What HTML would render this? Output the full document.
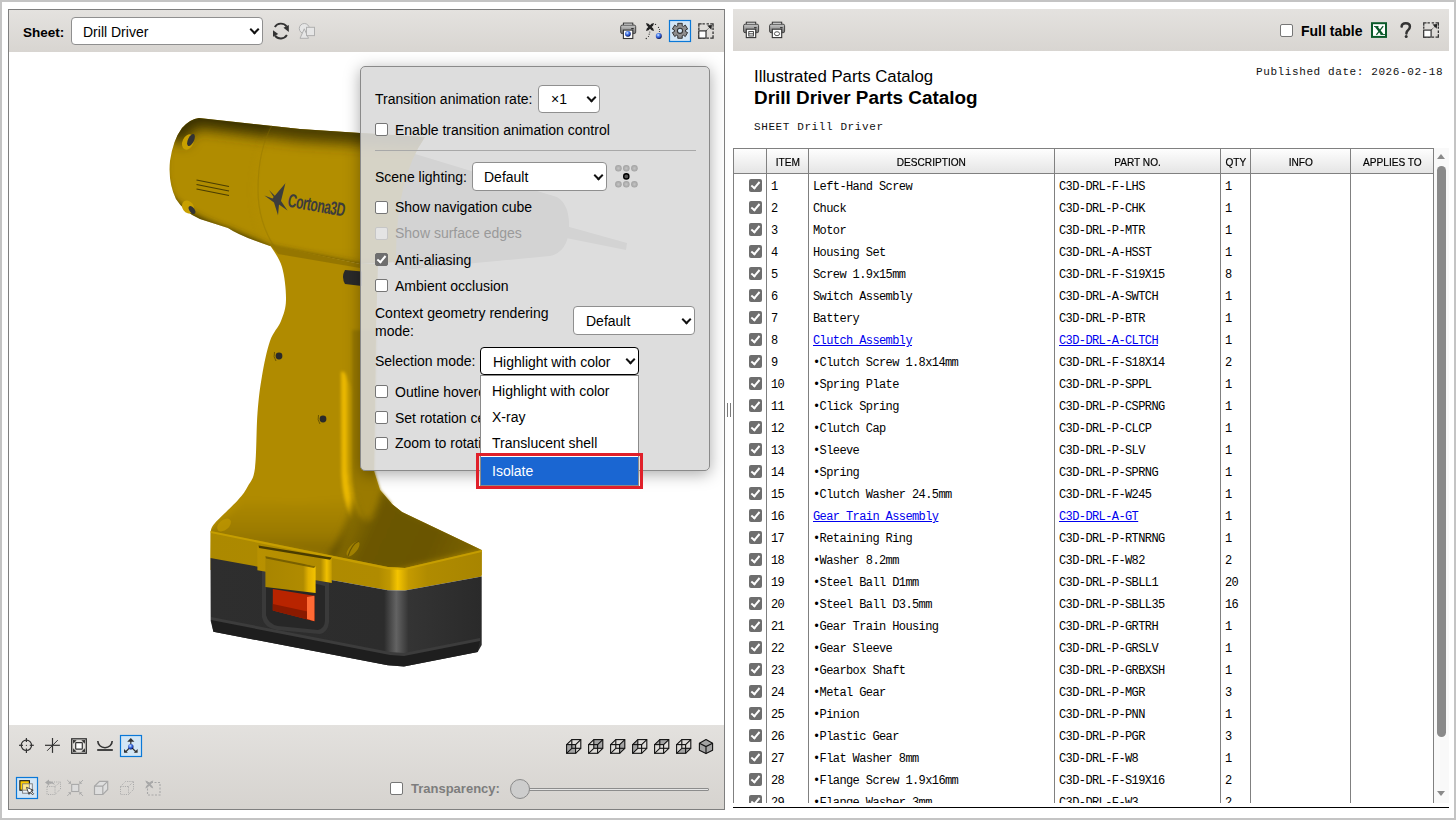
<!DOCTYPE html>
<html><head><meta charset="utf-8">
<style>
*{box-sizing:border-box}
html,body{margin:0;padding:0;width:1456px;height:820px;overflow:hidden;background:#fff;font-family:"Liberation Sans",sans-serif;color:#000}
.a{position:absolute}
.tb{position:absolute;background:linear-gradient(#e4e2df,#d8d5d1)}
.sel{position:absolute;background:#fff;border:1px solid #8f8f8f;border-radius:4px;color:#000}
.sel span{position:absolute;white-space:nowrap;font-size:14px;line-height:16px}
.sel .arr{position:absolute;right:4.5px;top:50%;width:7px;height:7px;border-right:2.3px solid #111;border-bottom:2.3px solid #111;transform:translateY(-72%) rotate(45deg)}
.chk{position:absolute;width:13px;height:13px;border:1px solid #767676;border-radius:2px;background:#fff}
.chk.on{background:#6e6e6e;border-color:#6e6e6e}
.chk.on:after{content:"";position:absolute;left:3px;top:0px;width:3px;height:7px;border-right:2px solid #fff;border-bottom:2px solid #fff;transform:rotate(40deg)}
.l{position:absolute;font-size:14px;line-height:16px;white-space:nowrap;color:#000}
/* table */
#tbl{position:absolute;left:733px;top:148px;width:716px;height:655px;overflow:hidden}
.hd{position:absolute;top:0;height:26px;border:1px solid #808080;background:linear-gradient(#fefefe,#e5e5e5);font-size:11.5px;text-align:center;line-height:26px;color:#000}
.hd b{display:inline-block;font-weight:normal;transform:scaleX(0.88);-webkit-text-stroke:0.2px #000}
.vl{position:absolute;top:25px;width:1px;height:640px;background:#808080}
.r{position:absolute;left:0;width:716px;height:22px;font-family:"Liberation Mono",monospace;font-size:12px;letter-spacing:-0.6px;line-height:22px;white-space:nowrap}
.r span{position:absolute;top:2px}
.r .c1{left:38px}.r .c2{left:80px}.r .c3{left:326px}.r .c4{left:492px}
.r a{color:#0000ee;text-decoration:underline}
.cb{position:absolute;left:16px;top:5px;width:13px;height:13px;border-radius:2px;background:#6e6e6e}
.cb:after{content:"";position:absolute;left:4px;top:1px;width:3px;height:7px;border-right:2px solid #fff;border-bottom:2px solid #fff;transform:rotate(40deg)}
</style></head><body>
<div class="a" style="left:0;top:0;width:1456px;height:820px;border:2px solid #c4c4c4"></div>
<!-- LEFT PANEL -->
<div class="a" style="left:8px;top:9px;width:717px;height:801px;border:1px solid #7f7f7f;background:#fff"></div>
<div class="tb" style="left:9px;top:10px;width:715px;height:42px"></div>
<div class="tb" style="left:9px;top:725px;width:715px;height:84px;background:linear-gradient(#e3e1de,#d6d3cf)"></div>
<div class="l" style="left:23px;top:25px;font-weight:bold;font-size:13.5px">Sheet:</div>
<div class="sel" style="left:71px;top:17px;width:192px;height:28px"><span style="left:11px;top:6px">Drill Driver</span><i class="arr"></i></div>
<div class="chk" style="left:390px;top:782px"></div>
<div class="l" style="left:411px;top:781px;font-weight:bold;font-size:13px;color:#7d7d7d">Transparency:</div>
<div class="a" style="left:520px;top:788px;width:189px;height:3px;border:1px solid #8c8c8c;background:#e6e6e6;border-radius:1px"></div>
<div class="a" style="left:510px;top:779px;width:20px;height:20px;border:1px solid #8a8a8a;border-radius:50%;background:#cdcdcd"></div>
<!-- splitter grip -->
<div class="a" style="left:727px;top:403px;width:1px;height:14px;background:#7a7a7a"></div>
<div class="a" style="left:730px;top:403px;width:1px;height:14px;background:#7a7a7a"></div>
<svg class="a" style="left:9px;top:52px" width="715" height="673" viewBox="9 52 715 673">
<defs>
<filter id="blr6" x="-20%" y="-80%" width="140%" height="260%"><feGaussianBlur stdDeviation="6.5"/></filter>
<filter id="blr5" x="-20%" y="-50%" width="140%" height="200%"><feGaussianBlur stdDeviation="5"/></filter>
<filter id="blr3" x="-20%" y="-50%" width="140%" height="200%"><feGaussianBlur stdDeviation="3"/></filter>
<filter id="blr2" x="-20%" y="-20%" width="140%" height="140%"><feGaussianBlur stdDeviation="3"/></filter>
<linearGradient id="gCrease" gradientUnits="userSpaceOnUse" x1="0" y1="495" x2="0" y2="550"><stop offset="0" stop-color="#000" stop-opacity="0"/><stop offset="0.7" stop-color="#000" stop-opacity="0.12"/><stop offset="1" stop-color="#000" stop-opacity="0.22"/></linearGradient>
<linearGradient id="gFrame" gradientUnits="userSpaceOnUse" x1="257" y1="0" x2="332" y2="0"><stop offset="0" stop-color="#b89100"/><stop offset="0.85" stop-color="#b08b00"/><stop offset="0.93" stop-color="#f0c000"/><stop offset="1" stop-color="#c09800"/></linearGradient>
<linearGradient id="gTab" gradientUnits="userSpaceOnUse" x1="265" y1="0" x2="316" y2="0"><stop offset="0" stop-color="#a88500"/><stop offset="0.75" stop-color="#b08b00"/><stop offset="0.85" stop-color="#e0b000"/><stop offset="1" stop-color="#f4c400"/></linearGradient>
<filter id="blr" x="-50%" y="-20%" width="200%" height="140%"><feGaussianBlur stdDeviation="1.6"/></filter>
<linearGradient id="gBar" gradientUnits="userSpaceOnUse" x1="236" y1="119" x2="220" y2="229">
 <stop offset="0" stop-color="#3a3000"/><stop offset="0.07" stop-color="#5e4e00"/><stop offset="0.17" stop-color="#8a7000"/><stop offset="0.3" stop-color="#a68500"/><stop offset="0.55" stop-color="#b08c00"/><stop offset="0.8" stop-color="#a88600"/><stop offset="0.92" stop-color="#8c7000"/><stop offset="1" stop-color="#504200"/>
</linearGradient>
<linearGradient id="gBarF" gradientUnits="userSpaceOnUse" x1="318" y1="128" x2="300" y2="262">
 <stop offset="0" stop-color="#3a3000"/><stop offset="0.06" stop-color="#5e4e00"/><stop offset="0.16" stop-color="#8c7200"/><stop offset="0.3" stop-color="#aa8800"/><stop offset="0.55" stop-color="#b48f00"/><stop offset="0.8" stop-color="#a88600"/><stop offset="0.93" stop-color="#8a6f00"/><stop offset="1" stop-color="#5a4a00"/>
</linearGradient>
<linearGradient id="gRear" gradientUnits="userSpaceOnUse" x1="168" y1="0" x2="200" y2="0">
 <stop offset="0" stop-color="#000" stop-opacity="0.25"/><stop offset="1" stop-color="#000" stop-opacity="0"/>
</linearGradient>
<linearGradient id="gRim" gradientUnits="userSpaceOnUse" x1="336" y1="0" x2="362" y2="0">
 <stop offset="0" stop-color="#b08b00" stop-opacity="0"/><stop offset="0.35" stop-color="#c89e00"/><stop offset="0.5" stop-color="#f0c000"/><stop offset="0.65" stop-color="#c09800"/><stop offset="0.85" stop-color="#8a6e00"/><stop offset="1" stop-color="#a08000"/>
</linearGradient>
<linearGradient id="gTop" gradientUnits="userSpaceOnUse" x1="340" y1="500" x2="470" y2="560">
 <stop offset="0" stop-color="#9a7b00"/><stop offset="0.3" stop-color="#6c5700"/><stop offset="0.7" stop-color="#6a5500"/><stop offset="1" stop-color="#7a6200"/>
</linearGradient>
<linearGradient id="gBand" gradientUnits="userSpaceOnUse" x1="210" y1="0" x2="482" y2="0">
 <stop offset="0" stop-color="#ac8900"/><stop offset="0.62" stop-color="#b08b00"/><stop offset="0.66" stop-color="#c09800"/><stop offset="0.69" stop-color="#f4c400"/><stop offset="0.73" stop-color="#c49a00"/><stop offset="0.8" stop-color="#b08b00"/><stop offset="1" stop-color="#a88500"/>
</linearGradient>
<linearGradient id="gBlk" gradientUnits="userSpaceOnUse" x1="210" y1="0" x2="482" y2="0">
 <stop offset="0" stop-color="#2e2e2e"/><stop offset="0.64" stop-color="#2c2c2c"/><stop offset="0.685" stop-color="#636363"/><stop offset="0.73" stop-color="#343434"/><stop offset="1" stop-color="#2a2a2a"/>
</linearGradient>
</defs>
<!-- behind popup: chuck & bit -->
<path d="M412 153 L557 197 Q570 205 569 228 Q568 252 550 256 L402 270 Q384 262 384 215 Q385 165 412 153 Z" fill="#8e8e8e"/>
<path d="M566 226 L627 243 L626 250 L566 238 Z" fill="#8e8e8e"/>
<!-- rear barrel -->
<clipPath id="barClip"><path d="M199 118 L300 129 L360 133 L425 137 Q395 180 396 262 L360 264 L270 246 Q240 236 228 228 L200 219 Q184 212 176 199 Q168 183 170 161 Q173 140 182 128 Q190 119 199 118 Z"/></clipPath>
<g clip-path="url(#barClip)">
<rect x="160" y="110" width="280" height="160" fill="#b08c00"/>
<path d="M172 140 Q180 112 205 114 L300 126 L430 134" fill="none" stroke="#3a3000" stroke-width="30" filter="url(#blr6)"/>
<path d="M165 200 Q185 222 228 236 L270 254 L360 272 L430 272" fill="none" stroke="#3a3000" stroke-width="14" filter="url(#blr3)"/>
<path d="M163 150 Q160 190 175 210" fill="none" stroke="#6a5500" stroke-width="8" filter="url(#blr3)"/>
<path d="M275 119 Q252 150 252 190 Q252 225 272 256 L440 256 L440 119 Z" fill="#c09800" opacity="0.12" filter="url(#blr3)"/>
</g>
<path d="M272 125.5 Q258 150 258 190 Q258 222 275 248" fill="none" stroke="#8a7000" stroke-width="1.2" opacity="0.35"/>
<!-- handle -->
<path d="M270 245 L360 264 L378 264 L376 330 L374 471 L380 490 L392 504 L402 512 L481.7 549.9 L481.7 575 L400 580 L210.5 570 L210.7 531 C211.4 529.7 210.4 528.2 215.0 523.0 C219.6 517.8 232.5 506.2 238.0 500.0 C243.5 493.8 245.2 491.3 248.0 486.0 C250.8 480.7 253.4 480.2 255.0 468.0 C256.6 455.8 256.3 428.3 257.5 413.0 C258.7 397.7 259.9 388.0 262.0 376.0 C264.1 364.0 266.8 350.2 270.0 341.0 C273.2 331.8 278.3 327.8 281.0 321.0 C283.7 314.2 285.8 309.0 286.0 300.0 C286.2 291.0 284.7 276.2 282.0 267.0 C279.3 257.8 272.0 248.7 270.0 245.0 Z" fill="#b08b00"/>
<!-- junction shadow -->
<path d="M270 245 L360 264 L360 268 L278 254 Z" fill="#8a6e00" opacity="0.7"/>
<!-- handle right rim -->
<g filter="url(#blr)">
<path d="M352 330 Q364 330 376 330 L374 471 L380 490 L392 504 L366 522 Q354 505 352 480 L352 380 Z" fill="#9a7a00"/>
<path d="M341 372 Q346 369 347.5 382 L347.5 470 Q348.5 500 358 518 L353 521 Q343 505 341.5 475 Z" fill="#eab800"/>
<path d="M347.5 382 Q350 380 351.5 392 L351.5 470 Q352.5 498 361 516 L358 518 Q348.5 500 347.5 470 Z" fill="#c29a00"/>
</g>
<!-- battery top surface right (dark) -->
<clipPath id="topClip"><path d="M300 480 L374 471 L380 490 L392 504 L402 512 L481.7 549.9 L481.7 560 L392 580 L210 560 L210.7 531 L250 480 Z"/></clipPath>
<g clip-path="url(#topClip)"><path filter="url(#blr2)" d="M354 496 Q358 512 366 520 Q374 522 382 488 L396 502 L410 512 L490 548 L392 572 L322 562 Q346 532 354 496 Z" fill="url(#gTop)"/></g>
<g clip-path="url(#topClip)"><path filter="url(#blr2)" d="M205 532 Q232 516 244 500 L300 503 L356 496 Q350 530 336 558 L205 536 Z" fill="url(#gCrease)"/></g>
<!-- band -->
<path d="M210.7 531 L388 567 L405 568 L481.7 549.9 L481.7 576.6 L405 590.5 L388 590.2 L210.5 558 Z" fill="url(#gBand)"/>
<path d="M210.7 531 L388 567 L405 568 L481.7 549.9 L481.7 552 L405 570 L388 569.5 L210.7 533 Z" fill="#d0a600" opacity="0.7"/>
<!-- black battery -->
<path d="M210.5 558 L388 590.2 L405 590.5 L481.7 576.6 L481.7 645 L477.7 651.9 L403.9 666.6 L387.8 665.3 L213.4 631.7 L210.7 621 Z" fill="url(#gBlk)"/>
<path d="M211 619 L390 654 L404 655 L480 640 L477.7 651.9 L403.9 666.6 L387.8 665.3 L213.4 631.7 Z" fill="#1e1e1e"/>
<path d="M211 617 L390 652 L404 653 L480 638 L480 641 L404 656 L390 655 L211 620 Z" fill="#3c3c3c"/>
<!-- latch -->
<path d="M262 568 L262 617 Q264 628 277 630 L320 634 Q328 632 329 622 L329 583 Z" fill="#3a3a3a"/>
<path d="M266 572 L266 615 Q268 624 278 626 L318 630 Q325 628 325 620 L325 586 Z" fill="#272727"/>
<path d="M257.4 545.4 L331.8 557.5 L331.8 583 L257.4 570.2 Z" fill="url(#gFrame)"/>
<path d="M258.5 545.6 L331.8 557.5 L330 559.8 L259 548 Z" fill="#4a3c00"/>
<path d="M272.8 589 L314.4 595.7 L314.4 621.2 L272.8 610.5 Z" fill="#b82400"/>
<path d="M272.8 604 L314.4 613 L314.4 621.2 L272.8 610.5 Z" fill="#8a1a00"/>
<path d="M307 597 L314.4 595.7 L314.4 621.2 L307 619 Z" fill="#ff6a34"/>
<path d="M265.4 556.2 L315.6 566.3 L315.6 593 L265.4 587 Z" fill="url(#gTab)"/>
<path d="M265.4 556.2 L315.6 566.3 L314 568 L266 558.5 Z" fill="#6a5500" opacity="0.8"/>
<!-- screws, holes -->
<circle cx="279" cy="356" r="3.4" fill="#2a2a2a"/><path d="M274.5 352 Q273 357 276 361" stroke="#6e5800" stroke-width="1" fill="none"/>
<circle cx="323" cy="419" r="3.4" fill="#2a2a2a"/><path d="M318.5 415 Q317 420 320 424" stroke="#6e5800" stroke-width="1" fill="none"/>
<ellipse cx="188" cy="142" rx="5.5" ry="8" fill="#c8a000" transform="rotate(25 188 142)"/>
<ellipse cx="191" cy="140" rx="3" ry="6.5" fill="#333" transform="rotate(25 191 140)"/>
<ellipse cx="188" cy="207" rx="5.5" ry="7" fill="#c8a000" transform="rotate(-35 188 207)"/>
<ellipse cx="192" cy="210" rx="2.5" ry="4.5" fill="#333" transform="rotate(-35 192 210)"/>
<ellipse cx="224" cy="525" rx="5" ry="8" fill="#c09800" opacity="0.7" transform="rotate(50 224 525)"/>
<ellipse cx="353" cy="549" rx="4" ry="9" fill="#a08000" transform="rotate(40 353 549)"/>
<path d="M348 556 Q352 544 359 541" stroke="#6a5500" stroke-width="1.2" fill="none"/>
<g stroke="#4a3d00" stroke-width="1.1"><line x1="196.5" y1="180" x2="229" y2="186.5"/><line x1="196.5" y1="184.5" x2="229" y2="191"/><line x1="196.5" y1="189" x2="229" y2="195.5"/></g>
<!-- trigger -->
<path d="M345 270 L362 271.5 L362 286 L345 284 Q341 277 345 270 Z" fill="#2a2a2a"/>
<!-- logo -->
<g fill="#3c3c3c">
<path d="M272.5 198.5 L285.4 183.2 L281 201 L287.5 210.4 L279 204.5 L278 215.3 L274 202.5 L264.4 195.6 Z"/>
<path d="M269 190 L276 197 L275 199 Z" />
<text x="0" y="0" font-family="Liberation Sans" font-size="19" font-weight="bold" letter-spacing="-0.8" transform="translate(287 206.5) rotate(10) scale(0.64 1)">Cortona3D</text>
</g>
</svg>
<!-- RIGHT PANEL -->
<div class="tb" style="left:733px;top:9px;width:716px;height:42px"></div>
<div class="chk" style="left:1280px;top:24px"></div>
<div class="l" style="left:1301px;top:23px;font-weight:bold;font-size:14px">Full table</div>
<div class="l" style="left:754px;top:67px;font-size:16.8px;line-height:19px">Illustrated Parts Catalog</div>
<div class="l" style="left:754px;top:87px;font-size:18.9px;line-height:22px;font-weight:bold">Drill Driver Parts Catalog</div>
<div class="l" style="left:754px;top:119px;font-size:11px;letter-spacing:0.6px;color:#111;font-family:'Liberation Mono',monospace">SHEET Drill Driver</div>
<div class="l" style="left:1256px;top:64px;font-size:11px;letter-spacing:0.6px;color:#111;font-family:'Liberation Mono',monospace">Published date: 2026-02-18</div>
<div id="tbl">
  <div class="hd" style="left:0;width:34px"></div>
  <div class="hd" style="left:33px;width:43px"><b>ITEM</b></div>
  <div class="hd" style="left:75px;width:247px"><b>DESCRIPTION</b></div>
  <div class="hd" style="left:321px;width:167px"><b>PART NO.</b></div>
  <div class="hd" style="left:487px;width:31px"><b>QTY</b></div>
  <div class="hd" style="left:517px;width:101px"><b>INFO</b></div>
  <div class="hd" style="left:617px;width:84px"><b>APPLIES TO</b></div>
  <div class="vl" style="left:0"></div><div class="vl" style="left:33px"></div><div class="vl" style="left:75px"></div><div class="vl" style="left:321px"></div><div class="vl" style="left:487px"></div><div class="vl" style="left:517px"></div><div class="vl" style="left:617px"></div><div class="vl" style="left:700px"></div>
<div class="r" style="top:26px"><i class="cb"></i><span class="c1">1</span><span class="c2">Left-Hand Screw</span><span class="c3">C3D-DRL-F-LHS</span><span class="c4">1</span></div>
<div class="r" style="top:48px"><i class="cb"></i><span class="c1">2</span><span class="c2">Chuck</span><span class="c3">C3D-DRL-P-CHK</span><span class="c4">1</span></div>
<div class="r" style="top:70px"><i class="cb"></i><span class="c1">3</span><span class="c2">Motor</span><span class="c3">C3D-DRL-P-MTR</span><span class="c4">1</span></div>
<div class="r" style="top:92px"><i class="cb"></i><span class="c1">4</span><span class="c2">Housing Set</span><span class="c3">C3D-DRL-A-HSST</span><span class="c4">1</span></div>
<div class="r" style="top:114px"><i class="cb"></i><span class="c1">5</span><span class="c2">Screw 1.9x15mm</span><span class="c3">C3D-DRL-F-S19X15</span><span class="c4">8</span></div>
<div class="r" style="top:136px"><i class="cb"></i><span class="c1">6</span><span class="c2">Switch Assembly</span><span class="c3">C3D-DRL-A-SWTCH</span><span class="c4">1</span></div>
<div class="r" style="top:158px"><i class="cb"></i><span class="c1">7</span><span class="c2">Battery</span><span class="c3">C3D-DRL-P-BTR</span><span class="c4">1</span></div>
<div class="r" style="top:180px"><i class="cb"></i><span class="c1">8</span><span class="c2"><a>Clutch Assembly</a></span><span class="c3"><a>C3D-DRL-A-CLTCH</a></span><span class="c4">1</span></div>
<div class="r" style="top:202px"><i class="cb"></i><span class="c1">9</span><span class="c2">•Clutch Screw 1.8x14mm</span><span class="c3">C3D-DRL-F-S18X14</span><span class="c4">2</span></div>
<div class="r" style="top:224px"><i class="cb"></i><span class="c1">10</span><span class="c2">•Spring Plate</span><span class="c3">C3D-DRL-P-SPPL</span><span class="c4">1</span></div>
<div class="r" style="top:246px"><i class="cb"></i><span class="c1">11</span><span class="c2">•Click Spring</span><span class="c3">C3D-DRL-P-CSPRNG</span><span class="c4">1</span></div>
<div class="r" style="top:268px"><i class="cb"></i><span class="c1">12</span><span class="c2">•Clutch Cap</span><span class="c3">C3D-DRL-P-CLCP</span><span class="c4">1</span></div>
<div class="r" style="top:290px"><i class="cb"></i><span class="c1">13</span><span class="c2">•Sleeve</span><span class="c3">C3D-DRL-P-SLV</span><span class="c4">1</span></div>
<div class="r" style="top:312px"><i class="cb"></i><span class="c1">14</span><span class="c2">•Spring</span><span class="c3">C3D-DRL-P-SPRNG</span><span class="c4">1</span></div>
<div class="r" style="top:334px"><i class="cb"></i><span class="c1">15</span><span class="c2">•Clutch Washer 24.5mm</span><span class="c3">C3D-DRL-F-W245</span><span class="c4">1</span></div>
<div class="r" style="top:356px"><i class="cb"></i><span class="c1">16</span><span class="c2"><a>Gear Train Assembly</a></span><span class="c3"><a>C3D-DRL-A-GT</a></span><span class="c4">1</span></div>
<div class="r" style="top:378px"><i class="cb"></i><span class="c1">17</span><span class="c2">•Retaining Ring</span><span class="c3">C3D-DRL-P-RTNRNG</span><span class="c4">1</span></div>
<div class="r" style="top:400px"><i class="cb"></i><span class="c1">18</span><span class="c2">•Washer 8.2mm</span><span class="c3">C3D-DRL-F-W82</span><span class="c4">2</span></div>
<div class="r" style="top:422px"><i class="cb"></i><span class="c1">19</span><span class="c2">•Steel Ball D1mm</span><span class="c3">C3D-DRL-P-SBLL1</span><span class="c4">20</span></div>
<div class="r" style="top:444px"><i class="cb"></i><span class="c1">20</span><span class="c2">•Steel Ball D3.5mm</span><span class="c3">C3D-DRL-P-SBLL35</span><span class="c4">16</span></div>
<div class="r" style="top:466px"><i class="cb"></i><span class="c1">21</span><span class="c2">•Gear Train Housing</span><span class="c3">C3D-DRL-P-GRTRH</span><span class="c4">1</span></div>
<div class="r" style="top:488px"><i class="cb"></i><span class="c1">22</span><span class="c2">•Gear Sleeve</span><span class="c3">C3D-DRL-P-GRSLV</span><span class="c4">1</span></div>
<div class="r" style="top:510px"><i class="cb"></i><span class="c1">23</span><span class="c2">•Gearbox Shaft</span><span class="c3">C3D-DRL-P-GRBXSH</span><span class="c4">1</span></div>
<div class="r" style="top:532px"><i class="cb"></i><span class="c1">24</span><span class="c2">•Metal Gear</span><span class="c3">C3D-DRL-P-MGR</span><span class="c4">3</span></div>
<div class="r" style="top:554px"><i class="cb"></i><span class="c1">25</span><span class="c2">•Pinion</span><span class="c3">C3D-DRL-P-PNN</span><span class="c4">1</span></div>
<div class="r" style="top:576px"><i class="cb"></i><span class="c1">26</span><span class="c2">•Plastic Gear</span><span class="c3">C3D-DRL-P-PGR</span><span class="c4">3</span></div>
<div class="r" style="top:598px"><i class="cb"></i><span class="c1">27</span><span class="c2">•Flat Washer 8mm</span><span class="c3">C3D-DRL-F-W8</span><span class="c4">1</span></div>
<div class="r" style="top:620px"><i class="cb"></i><span class="c1">28</span><span class="c2">•Flange Screw 1.9x16mm</span><span class="c3">C3D-DRL-F-S19X16</span><span class="c4">2</span></div>
<div class="r" style="top:642px"><i class="cb"></i><span class="c1">29</span><span class="c2">•Flange Washer 3mm</span><span class="c3">C3D-DRL-F-W3</span><span class="c4">2</span></div>
</div>
<!-- scrollbar -->
<div class="a" style="left:1434px;top:148px;width:15px;height:655px;background:#f9f9f9"></div>
<div class="a" style="left:1437px;top:154px;width:0;height:0;border-left:4.5px solid transparent;border-right:4.5px solid transparent;border-bottom:5px solid #8a8a8a"></div>
<div class="a" style="left:1437px;top:166px;width:9px;height:571px;border-radius:4.5px;background:#8a8a8a"></div>
<div class="a" style="left:1437px;top:791px;width:0;height:0;border-left:4.5px solid transparent;border-right:4.5px solid transparent;border-top:5px solid #8a8a8a"></div>
<div class="a" style="left:733px;top:807px;width:716px;height:1px;background:#000"></div>
<svg class="a" style="left:0;top:0" width="1456" height="820" viewBox="0 0 1456 820">
<defs>
<radialGradient id="ball" cx="0.4" cy="0.35" r="0.65"><stop offset="0" stop-color="#e8f0ff"/><stop offset="0.35" stop-color="#5a8cf0"/><stop offset="0.8" stop-color="#1a3cb0"/><stop offset="1" stop-color="#000830"/></radialGradient>
<linearGradient id="prn" x1="0" y1="0" x2="0" y2="1"><stop offset="0" stop-color="#c8c8c8"/><stop offset="1" stop-color="#707070"/></linearGradient>
</defs>
<g fill="none" stroke="#333" stroke-width="1.9"><path d="M274.8 27 A7.2 7.2 0 0 1 286.6 26.4"/><path d="M286.9 35 A7.2 7.2 0 0 1 275 35.6"/></g>
<path d="M283.5 27.8 L288.8 25 L288.8 31.9 Z" fill="#333"/><path d="M273 30.2 L273 36.8 L278.2 34 Z" fill="#333"/>
<g stroke="#b0b0b0" stroke-width="1" fill="#e6e6e6"><circle cx="304.3" cy="28.5" r="5"/><path d="M300 38.3 L304.3 28.8 L308.5 38.3 Z"/><rect x="306.5" y="27.3" width="8" height="8.3"/></g>
<rect x="623.4000000000001" y="23.1" width="9.4" height="3" fill="#fff" stroke="#333" stroke-width="1"/><rect x="620.7" y="25.1" width="15" height="8.5" rx="1.5" fill="url(#prn)" stroke="#444" stroke-width="1"/><rect x="631.2" y="28.1" width="2.5" height="1" fill="#222"/><rect x="623.4000000000001" y="30.1" width="9.4" height="8.4" fill="#fff" stroke="#333" stroke-width="1.1"/><circle cx="627.9" cy="33.8" r="2.9" fill="url(#ball)"/>
<g fill="#222"><path d="M646 23 L648.5 23.8 L650 25.3 L651.5 23.8 L654 23 L653.2 25.5 L651.7 27 L653.2 28.5 L654 31 L651.5 30.2 L650 28.7 L648.5 30.2 L646 31 L646.8 28.5 L648.3 27 L646.8 25.5 Z"/></g>
<g fill="#333"><circle cx="646.3" cy="38.5" r="0.7"/><circle cx="648.5" cy="36.5" r="0.6"/><circle cx="649.2" cy="34.2" r="0.6"/><circle cx="649.8" cy="32" r="0.6"/><circle cx="655.5" cy="24.4" r="0.7"/><circle cx="658.5" cy="27.4" r="0.6"/><circle cx="659.5" cy="29.5" r="0.6"/><circle cx="659.5" cy="31.5" r="0.6"/></g>
<circle cx="658.8" cy="35.9" r="3" fill="url(#ball)"/>
<rect x="669.5" y="20.5" width="21" height="21" fill="#d3e6f5" stroke="#0a78d8" stroke-width="1.2"/>
<path d="M677.72 23.34 L682.28 23.34 L682.10 25.61 L683.45 26.39 L685.32 25.10 L687.60 29.05 L685.55 30.02 L685.55 31.58 L687.60 32.55 L685.32 36.50 L683.45 35.21 L682.10 35.99 L682.28 38.26 L677.72 38.26 L677.90 35.99 L676.55 35.21 L674.68 36.50 L672.40 32.55 L674.45 31.58 L674.45 30.02 L672.40 29.05 L674.68 25.10 L676.55 26.39 L677.90 25.61 Z" fill="#8e8e8e" stroke="#333" stroke-width="1"/>
<circle cx="680" cy="30.8" r="2.6" fill="#d3e6f5" stroke="#333" stroke-width="1.1"/>
<path d="M698.85 26.75 L698.85 23.95 L701.65 23.95 M710.25 23.95 L713.05 23.95 L713.05 26.75 M713.05 35.25 L713.05 38.05 L710.25 38.05 M698.85 35.25 L698.85 38.05 L701.65 38.05 M702.44 23.95 L704.84 23.95 M702.44 38.05 L704.84 38.05 M706.55 23.95 L708.95 23.95 M706.55 38.05 L708.95 38.05 M698.85 27.50 L698.85 29.90 M713.05 27.50 L713.05 29.90 M698.85 31.59 L698.85 33.99 M713.05 31.59 L713.05 33.99 " fill="none" stroke="#333" stroke-width="1.3"/><rect x="698.8000000000001" y="30.900000000000002" width="7.199999999999977" height="7.200000000000002" fill="#fff" stroke="#333" stroke-width="1.2"/><path d="M706.1 30.8 L710.7 26.3" stroke="#333" stroke-width="1" stroke-dasharray="1.2 0.8"/><path d="M707.2 25.6 L711.9000000000001 25.1 L711.4000000000001 29.8 Z" fill="#222"/>
<rect x="746.3000000000001" y="22.2" width="9.4" height="3" fill="#fff" stroke="#333" stroke-width="1"/><rect x="743.6" y="24.2" width="15" height="8.5" rx="1.5" fill="url(#prn)" stroke="#444" stroke-width="1"/><rect x="754.1" y="27.2" width="2.5" height="1" fill="#222"/><rect x="746.3000000000001" y="29.2" width="9.4" height="8.4" fill="#fff" stroke="#333" stroke-width="1.1"/><rect x="748.8" y="31.6" width="4.6" height="4.4" fill="none" stroke="#333" stroke-width="0.9"/><line x1="748.8" y1="33.8" x2="753.4" y2="33.8" stroke="#333" stroke-width="0.9"/>
<rect x="772.3000000000001" y="22.2" width="9.4" height="3" fill="#fff" stroke="#333" stroke-width="1"/><rect x="769.6" y="24.2" width="15" height="8.5" rx="1.5" fill="url(#prn)" stroke="#444" stroke-width="1"/><rect x="780.1" y="27.2" width="2.5" height="1" fill="#222"/><rect x="772.3000000000001" y="29.2" width="9.4" height="8.4" fill="#fff" stroke="#333" stroke-width="1.1"/><ellipse cx="777" cy="33.7" rx="2.6" ry="2" fill="none" stroke="#444" stroke-width="0.9"/>
<rect x="1372" y="23.2" width="14" height="13.7" fill="#fff" stroke="#0b5a2a" stroke-width="2"/>
<path d="M1374.6 26.5 L1377.6 26.5 L1383.8 34.5 L1380.8 34.5 Z" fill="#0b5a2a"/><path d="M1383.2 26.2 L1376.4 34.8" stroke="#0b5a2a" stroke-width="1.3"/><path d="M1374 26.5 L1378.5 26.5 M1380.5 34.5 L1385 34.5" stroke="#0b5a2a" stroke-width="0.9"/>
<path d="M1401.6 26.6 Q1401.8 23.2 1405.8 23.2 Q1409.9 23.2 1409.9 26.6 Q1409.9 28.8 1408 30.2 Q1406.5 31.3 1406.4 33.4" fill="none" stroke="#333" stroke-width="2.5" stroke-linecap="round"/><circle cx="1406.2" cy="36.6" r="1.5" fill="#333"/>
<path d="M1423.75 25.65 L1423.75 22.85 L1426.55 22.85 M1435.55 22.85 L1438.35 22.85 L1438.35 25.65 M1438.35 34.25 L1438.35 37.05 L1435.55 37.05 M1423.75 34.25 L1423.75 37.05 L1426.55 37.05 M1427.47 22.85 L1429.87 22.85 M1427.47 37.05 L1429.87 37.05 M1431.70 22.85 L1434.10 22.85 M1431.70 37.05 L1434.10 37.05 M1423.75 26.44 L1423.75 28.84 M1438.35 26.44 L1438.35 28.84 M1423.75 30.55 L1423.75 32.95 M1438.35 30.55 L1438.35 32.95 " fill="none" stroke="#333" stroke-width="1.3"/><rect x="1423.6999999999998" y="30.1" width="7.400000000000136" height="7.000000000000003" fill="#fff" stroke="#333" stroke-width="1.2"/><path d="M1431.2 30.0 L1436 25.2" stroke="#333" stroke-width="1" stroke-dasharray="1.2 0.8"/><path d="M1432.5 24.5 L1437.2 24.0 L1436.7 28.7 Z" fill="#222"/>
<g stroke="#333" stroke-width="1.2" fill="none"><circle cx="26.4" cy="745.3" r="5.2"/><line x1="19" y1="745.3" x2="23" y2="745.3"/><line x1="29.8" y1="745.3" x2="33.8" y2="745.3"/><line x1="26.4" y1="738" x2="26.4" y2="742"/><line x1="26.4" y1="748.6" x2="26.4" y2="752.9"/></g><circle cx="26.4" cy="745.3" r="0.6" fill="#333"/>
<g stroke="#333" stroke-width="1.2"><line x1="45" y1="745.3" x2="59.9" y2="745.3"/><line x1="52.5" y1="738" x2="52.5" y2="752.9"/><line x1="47.1" y1="750.8" x2="57.8" y2="740.1" stroke-width="1"/></g>
<rect x="71.7" y="738.8" width="14.6" height="14.5" fill="none" stroke="#333" stroke-width="1.3"/><rect x="75.7" y="742.6" width="6.6" height="6.6" rx="0.6" fill="#fff" stroke="#333" stroke-width="1.2"/>
<g fill="#333"><path d="M72.9 740 L76.6 740.3 L73.2 743.7 Z"/><path d="M85.1 740 L84.8 743.7 L81.4 740.3 Z"/><path d="M72.9 752 L73.2 748.3 L76.6 751.7 Z"/><path d="M85.1 752 L81.4 751.7 L84.8 748.3 Z"/></g>
<path d="M97.8 741.1 A7.2 6.6 0 0 0 112.2 741.1" fill="none" stroke="#333" stroke-width="1.6"/><rect x="97.2" y="749.1" width="15.6" height="1.8" fill="#333"/>
<rect x="120.5" y="735.5" width="21" height="21" fill="#d3e6f5" stroke="#0a78d8" stroke-width="1.2"/>
<g stroke="#333" stroke-width="1.2"><line x1="130.8" y1="746" x2="130.8" y2="740"/><line x1="130.8" y1="746.7" x2="125.5" y2="752"/><line x1="130.8" y1="746.7" x2="136.1" y2="752"/></g>
<g fill="#333"><path d="M127.2 741.8 L130.8 738 L134.4 741.8 Z"/><path d="M124 749 L124 752.8 L127.8 752.8 Z"/><path d="M137.6 749 L137.6 752.8 L133.8 752.8 Z"/></g>
<circle cx="130.8" cy="746.7" r="2.7" fill="url(#ball)"/>
<rect x="16.5" y="777.5" width="21" height="21" fill="#d3e6f5" stroke="#0a78d8" stroke-width="1.2"/>
<rect x="19.9" y="780.7" width="9.5" height="9.5" fill="#ffcc00" stroke="#111" stroke-width="1.1"/>
<rect x="22.6" y="783.8" width="9.7" height="9.4" fill="rgba(255,255,255,0.55)" stroke="#7a7a7a" stroke-width="0.9"/>
<path d="M26.5 787.3 L33.2 790.2 L30.8 791 L33.6 793.8 L32.6 794.8 L29.8 792 L29 794.4 Z" fill="#fff" stroke="#333" stroke-width="0.9" stroke-linejoin="round"/>
<g stroke="#a8a8a8" stroke-width="1" fill="none" stroke-dasharray="1 1.2"><rect x="47" y="786.5" width="8" height="8"/><path d="M55 786.5 L60.5 782 L60.5 789 L55 794.5"/><path d="M47 786.5 L52 782 L60.5 782"/></g>
<path d="M45 782.5 L49 779.5 L49 781.2 Q53.5 781 54.8 785 Q52 783 49 783.8 L49 785.5 Z" fill="#a8a8a8"/>
<rect x="71.7" y="784.4" width="7.1" height="7.1" fill="#dcdcdc" stroke="#a8a8a8" stroke-width="1.1"/>
<g stroke="#a8a8a8" stroke-width="0.9"><line x1="67.2" y1="780" x2="70.5" y2="783.3"/><line x1="83" y1="780" x2="79.8" y2="783.3"/><line x1="67.2" y1="796" x2="70.5" y2="792.6"/><line x1="83" y1="796" x2="79.8" y2="792.6"/></g><g fill="#a8a8a8"><path d="M70.9 783.7 L70.9 780.8 L68 783.7 Z"/><path d="M79.4 783.7 L79.4 780.8 L82.3 783.7 Z"/><path d="M70.9 792.2 L70.9 795.1 L68 792.2 Z"/><path d="M79.4 792.2 L79.4 795.1 L82.3 792.2 Z"/></g>
<path d="M94.5 786.2 L99.5 781.3 L107.7 781.3 L107.7 789.5 L102.8 794.5 L94.5 794.5 Z" fill="#dedede" stroke="#a8a8a8" stroke-width="1.2"/><path d="M94.5 786.2 L102.8 786.2 L102.8 794.5 M102.8 786.2 L107.7 781.3" fill="none" stroke="#a8a8a8" stroke-width="1.2"/>
<g stroke="#a8a8a8" stroke-width="1" fill="none" stroke-dasharray="1 1.2"><rect x="120.5" y="786.5" width="8" height="8"/><path d="M120.5 786.5 L125.5 781.5 L133.5 781.5 L133.5 789.5 L128.5 794.5 M128.5 786.5 L133.5 781.5"/></g>
<rect x="147.5" y="782.5" width="12.5" height="12.5" fill="none" stroke="#a8a8a8" stroke-width="1.1" stroke-dasharray="2 1.5"/>
<path d="M145.3 780.4 L147.5 781.2 L149.3 783 L151 781.2 L153.3 780.4 L152.5 782.6 L150.7 784.4 L152.5 786.2 L153.3 788.4 L151 787.6 L149.3 785.8 L147.5 787.6 L145.3 788.4 L146.1 786.2 L147.9 784.4 L146.1 782.6 Z" fill="#a8a8a8"/>
<path d="M566.6 744.6 L575.6 744.6 L575.6 753.3 L566.6 753.3 Z" fill="#a4a4a4"/><g fill="none" stroke="#111" stroke-width="1.1"><rect x="566.6" y="744.6" width="9" height="8.7"/><rect x="571.8000000000001" y="739.6" width="9" height="8.7"/><path d="M566.6 744.6 L571.8000000000001 739.6 M575.6 744.6 L580.8000000000001 739.6 M566.6 753.3 L571.8000000000001 748.3 M575.6 753.3 L580.8000000000001 748.3"/></g>
<path d="M593.8000000000001 739.6 L602.8000000000001 739.6 L602.8000000000001 748.3 L593.8000000000001 748.3 Z" fill="#a4a4a4"/><g fill="none" stroke="#111" stroke-width="1.1"><rect x="588.6" y="744.6" width="9" height="8.7"/><rect x="593.8000000000001" y="739.6" width="9" height="8.7"/><path d="M588.6 744.6 L593.8000000000001 739.6 M597.6 744.6 L602.8000000000001 739.6 M588.6 753.3 L593.8000000000001 748.3 M597.6 753.3 L602.8000000000001 748.3"/></g>
<path d="M619.6 744.6 L624.8000000000001 739.6 L624.8000000000001 748.3 L619.6 753.3 Z" fill="#a4a4a4"/><g fill="none" stroke="#111" stroke-width="1.1"><rect x="610.6" y="744.6" width="9" height="8.7"/><rect x="615.8000000000001" y="739.6" width="9" height="8.7"/><path d="M610.6 744.6 L615.8000000000001 739.6 M619.6 744.6 L624.8000000000001 739.6 M610.6 753.3 L615.8000000000001 748.3 M619.6 753.3 L624.8000000000001 748.3"/></g>
<path d="M632.6 744.6 L637.8000000000001 739.6 L637.8000000000001 748.3 L632.6 753.3 Z" fill="#a4a4a4"/><g fill="none" stroke="#111" stroke-width="1.1"><rect x="632.6" y="744.6" width="9" height="8.7"/><rect x="637.8000000000001" y="739.6" width="9" height="8.7"/><path d="M632.6 744.6 L637.8000000000001 739.6 M641.6 744.6 L646.8000000000001 739.6 M632.6 753.3 L637.8000000000001 748.3 M641.6 753.3 L646.8000000000001 748.3"/></g>
<path d="M654.6 744.6 L659.8000000000001 739.6 L668.8000000000001 739.6 L663.6 744.6 Z" fill="#a4a4a4"/><g fill="none" stroke="#111" stroke-width="1.1"><rect x="654.6" y="744.6" width="9" height="8.7"/><rect x="659.8000000000001" y="739.6" width="9" height="8.7"/><path d="M654.6 744.6 L659.8000000000001 739.6 M663.6 744.6 L668.8000000000001 739.6 M654.6 753.3 L659.8000000000001 748.3 M663.6 753.3 L668.8000000000001 748.3"/></g>
<path d="M676.6 753.3 L681.8000000000001 748.3 L690.8000000000001 748.3 L685.6 753.3 Z" fill="#a4a4a4"/><g fill="none" stroke="#111" stroke-width="1.1"><rect x="676.6" y="744.6" width="9" height="8.7"/><rect x="681.8000000000001" y="739.6" width="9" height="8.7"/><path d="M676.6 744.6 L681.8000000000001 739.6 M685.6 744.6 L690.8000000000001 739.6 M676.6 753.3 L681.8000000000001 748.3 M685.6 753.3 L690.8000000000001 748.3"/></g>
<path d="M706 739.6 L712.6 743.2 L712.6 750.2 L706 753.6 L699.4 750.2 L699.4 743.2 Z" fill="#a4a4a4" stroke="#111" stroke-width="1.1" stroke-linejoin="round"/><path d="M699.4 743.2 L706 746.6 L712.6 743.2 M706 746.6 L706 753.6" fill="none" stroke="#111" stroke-width="1.1"/>
</svg><!-- POPUP -->
<div class="a" style="left:360px;top:66px;width:350px;height:405px;border:1px solid #8a8a8a;border-radius:5px;background:rgba(218,218,218,0.91);box-shadow:0 3px 16px rgba(0,0,0,0.34)"></div>
<div class="l" style="left:375px;top:91px">Transition animation rate:</div>
<div class="sel" style="left:538px;top:85px;width:62px;height:28px"><span style="left:12px;top:5px">×1</span><i class="arr"></i></div>
<div class="chk" style="left:375px;top:123px"></div>
<div class="l" style="left:395px;top:122px">Enable transition animation control</div>
<div class="a" style="left:375px;top:150px;width:321px;height:1px;background:#a8a8a8"></div>
<div class="l" style="left:375px;top:169px">Scene lighting:</div>
<div class="sel" style="left:472px;top:162px;width:135px;height:29px"><span style="left:11px;top:6px">Default</span><i class="arr"></i></div>
<div class="chk" style="left:375px;top:201px"></div>
<div class="l" style="left:395px;top:199px">Show navigation cube</div>
<div class="chk" style="left:375px;top:227px;border-color:#c6c6c6;background:#e4e4e4"></div>
<div class="l" style="left:395px;top:225px;color:#9a9a9a">Show surface edges</div>
<div class="chk on" style="left:375px;top:253px"></div>
<div class="l" style="left:395px;top:252px">Anti-aliasing</div>
<div class="chk" style="left:375px;top:279px"></div>
<div class="l" style="left:395px;top:278px">Ambient occlusion</div>
<div class="l" style="left:375px;top:303.5px;line-height:18.5px">Context geometry rendering<br>mode:</div>
<div class="sel" style="left:573px;top:306px;width:122px;height:29px"><span style="left:12px;top:6px">Default</span><i class="arr"></i></div>
<div class="l" style="left:375px;top:353px">Selection mode:</div>
<div class="sel" style="left:480px;top:347px;width:159px;height:28px;border-color:#000"><span style="left:12px;top:6px">Highlight with color</span><i class="arr"></i></div>
<div class="chk" style="left:375px;top:385px"></div>
<div class="l" style="left:395px;top:384px">Outline hovered</div>
<div class="chk" style="left:375px;top:411px"></div>
<div class="l" style="left:395px;top:410px">Set rotation center</div>
<div class="chk" style="left:375px;top:437px"></div>
<div class="l" style="left:395px;top:435px">Zoom to rotation</div>
<!-- dropdown list -->
<div class="a" style="left:480px;top:375px;width:159px;height:111px;border:1px solid #8a8a8a;background:#fff"></div>
<div class="l" style="left:492px;top:383px">Highlight with color</div>
<div class="l" style="left:492px;top:409px">X-ray</div>
<div class="l" style="left:492px;top:435px">Translucent shell</div>
<div class="a" style="left:481px;top:457px;width:157px;height:28px;background:#1a66d2"></div>
<div class="l" style="left:492px;top:463px;color:#fff">Isolate</div>
<div class="a" style="left:476px;top:453px;width:167px;height:36px;border:3px solid #e0202a"></div>
<!-- dots -->
<svg class="a" style="left:612px;top:162px" width="30" height="30" viewBox="612 162 30 30">
<defs><radialGradient id="dg"><stop offset="0" stop-color="#c4c4c4"/><stop offset="1" stop-color="#a2a2a2"/></radialGradient></defs>
<circle cx="618.4" cy="168.3" r="3.3" fill="url(#dg)"/><circle cx="626.3" cy="168.3" r="3.3" fill="url(#dg)"/><circle cx="634.4" cy="168.3" r="3.3" fill="url(#dg)"/>
<circle cx="618.4" cy="184.3" r="3.3" fill="url(#dg)"/><circle cx="626.3" cy="184.3" r="3.3" fill="url(#dg)"/><circle cx="634.4" cy="184.3" r="3.3" fill="url(#dg)"/>
<circle cx="626.3" cy="176.4" r="2.6" fill="#555" stroke="#000" stroke-width="1.4"/>
</svg>
</body></html>
